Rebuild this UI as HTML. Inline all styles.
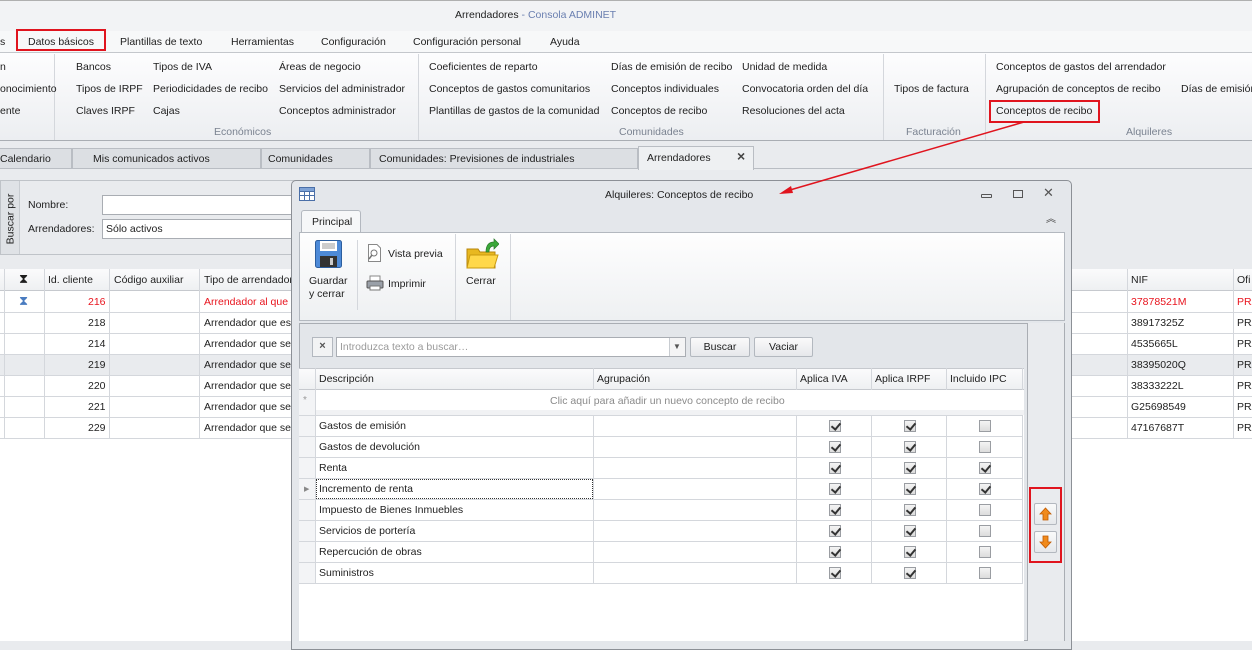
<!DOCTYPE html>
<html><head><meta charset="utf-8"><style>
*{box-sizing:border-box;margin:0;padding:0}
body{width:1252px;height:641px;overflow:hidden;position:relative;background:#e9ebee;font-family:"Liberation Sans",sans-serif;font-size:10.5px;color:#1e1e1e}
.a{position:absolute;white-space:nowrap}
.t{position:absolute;white-space:nowrap;line-height:14px}
.vl{position:absolute;width:1px;background:#d4d7dc}
.hl{position:absolute;height:1px;background:#d4d7dc}
.cb{position:absolute;width:12px;height:12px;border:1px solid #9a9da2;background:linear-gradient(#f4f4f4,#dcdcdc)}
.cb.c::after{content:"";position:absolute;left:3px;top:0px;width:4px;height:7px;border:solid #333;border-width:0 2px 2px 0;transform:rotate(40deg)}
.btn{position:absolute;border:1px solid #b3b8bf;border-radius:2px;background:linear-gradient(#fafafa,#e6e8eb);text-align:center;line-height:18px}
</style></head><body>
<div class="a" style="left:0;top:0;width:1252px;height:31px;background:#f2f3f5;border-top:1px solid #b0b0b0"></div>
<div class="t" style="left:455px;top:8px">Arrendadores <span style="color:#6a7fb0">- Consola ADMINET</span></div>
<div class="a" style="left:0;top:31px;width:1252px;height:22px;background:#f7f8f9;border-bottom:1px solid #c4c7cc"></div>
<div class="t" style="left:0;top:35px">s</div>
<div class="a" style="left:16px;top:29px;width:90px;height:22px;border:2px solid #e0141e"></div>
<div class="t" style="left:28px;top:35px">Datos básicos</div>
<div class="t" style="left:120px;top:35px">Plantillas de texto</div>
<div class="t" style="left:231px;top:35px">Herramientas</div>
<div class="t" style="left:321px;top:35px">Configuración</div>
<div class="t" style="left:413px;top:35px">Configuración personal</div>
<div class="t" style="left:550px;top:35px">Ayuda</div>
<div class="a" style="left:0;top:53px;width:1252px;height:88px;background:linear-gradient(#fdfdfe,#eceef1);border-bottom:1px solid #a9adb3"></div>
<div class="vl" style="left:54px;top:54px;height:86px"></div>
<div class="vl" style="left:418px;top:54px;height:86px"></div>
<div class="vl" style="left:883px;top:54px;height:86px"></div>
<div class="vl" style="left:985px;top:54px;height:86px"></div>
<div class="t" style="left:0;top:60px">n</div>
<div class="t" style="left:0;top:82px">onocimiento</div>
<div class="t" style="left:0;top:104px">ente</div>
<div class="t" style="left:76px;top:60px">Bancos</div>
<div class="t" style="left:76px;top:82px">Tipos de IRPF</div>
<div class="t" style="left:76px;top:104px">Claves IRPF</div>
<div class="t" style="left:153px;top:60px">Tipos de IVA</div>
<div class="t" style="left:153px;top:82px">Periodicidades de recibo</div>
<div class="t" style="left:153px;top:104px">Cajas</div>
<div class="t" style="left:279px;top:60px">Áreas de negocio</div>
<div class="t" style="left:279px;top:82px">Servicios del administrador</div>
<div class="t" style="left:279px;top:104px">Conceptos administrador</div>
<div class="t" style="left:214px;top:125px;color:#7a8290">Económicos</div>
<div class="t" style="left:429px;top:60px">Coeficientes de reparto</div>
<div class="t" style="left:429px;top:82px">Conceptos de gastos comunitarios</div>
<div class="t" style="left:429px;top:104px">Plantillas de gastos de la comunidad</div>
<div class="t" style="left:611px;top:60px">Días de emisión de recibo</div>
<div class="t" style="left:611px;top:82px">Conceptos individuales</div>
<div class="t" style="left:611px;top:104px">Conceptos de recibo</div>
<div class="t" style="left:742px;top:60px">Unidad de medida</div>
<div class="t" style="left:742px;top:82px">Convocatoria orden del día</div>
<div class="t" style="left:742px;top:104px">Resoluciones del acta</div>
<div class="t" style="left:619px;top:125px;color:#7a8290">Comunidades</div>
<div class="t" style="left:894px;top:82px">Tipos de factura</div>
<div class="t" style="left:906px;top:125px;color:#7a8290">Facturación</div>
<div class="t" style="left:996px;top:60px">Conceptos de gastos del arrendador</div>
<div class="t" style="left:996px;top:82px">Agrupación de conceptos de recibo</div>
<div class="t" style="left:1181px;top:82px">Días de emisión</div>
<div class="a" style="left:989px;top:100px;width:111px;height:23px;border:2px solid #e0141e"></div>
<div class="t" style="left:996px;top:104px">Conceptos de recibo</div>
<div class="t" style="left:1126px;top:125px;color:#7a8290">Alquileres</div>
<div class="a" style="left:0;top:148px;width:1252px;height:21px;border-bottom:1px solid #b9bdc3"></div>
<div class="a" style="left:-2px;top:148px;width:74px;height:21px;background:#dcdfe3;border:1px solid #b9bdc3"></div>
<div class="a" style="left:72px;top:148px;width:189px;height:21px;background:#dcdfe3;border:1px solid #b9bdc3"></div>
<div class="a" style="left:261px;top:148px;width:109px;height:21px;background:#dcdfe3;border:1px solid #b9bdc3"></div>
<div class="a" style="left:370px;top:148px;width:268px;height:21px;background:#dcdfe3;border:1px solid #b9bdc3"></div>
<div class="a" style="left:638px;top:146px;width:116px;height:24px;background:#eef0f2;border:1px solid #b9bdc3;border-bottom:none"></div>
<div class="t" style="left:0;top:152px">Calendario</div>
<div class="t" style="left:93px;top:152px">Mis comunicados activos</div>
<div class="t" style="left:268px;top:152px">Comunidades</div>
<div class="t" style="left:379px;top:152px">Comunidades: Previsiones de industriales</div>
<div class="t" style="left:647px;top:151px">Arrendadores</div>
<div class="t" style="left:737px;top:149px;font-size:14px;font-weight:bold;color:#444">×</div>
<div class="a" style="left:0;top:180px;width:300px;height:75px;background:#e9ebee;border:1px solid #bfc3c8"></div>
<div class="a" style="left:1px;top:181px;width:19px;height:73px;background:#dfe2e6;border-right:1px solid #c8ccd1"></div>
<div class="t" style="left:-15px;top:212px;transform:rotate(-90deg)">Buscar por</div>
<div class="t" style="left:28px;top:198px">Nombre:</div>
<div class="t" style="left:28px;top:222px">Arrendadores:</div>
<div class="a" style="left:102px;top:195px;width:200px;height:20px;background:#fff;border:1px solid #a9adb3"></div>
<div class="a" style="left:102px;top:219px;width:200px;height:20px;background:#fff;border:1px solid #a9adb3"></div>
<div class="t" style="left:106px;top:222px">Sólo activos</div>
<div class="a" style="left:0;top:269px;width:1252px;height:372px;background:#fff"></div>
<div class="a" style="left:0;top:269px;width:1252px;height:22px;background:linear-gradient(#fbfbfc,#eef0f2);border-bottom:1px solid #c6c9ce"></div>
<div class="a" style="left:0;top:354px;width:1252px;height:21px;background:#e9ebee"></div>
<div class="hl" style="left:0;top:312px;width:1252px"></div><div class="hl" style="left:0;top:333px;width:1252px"></div><div class="hl" style="left:0;top:354px;width:1252px"></div><div class="hl" style="left:0;top:375px;width:1252px"></div><div class="hl" style="left:0;top:396px;width:1252px"></div><div class="hl" style="left:0;top:417px;width:1252px"></div><div class="hl" style="left:0;top:438px;width:1252px"></div>
<div class="vl" style="left:4px;top:269px;height:169px"></div>
<div class="vl" style="left:44px;top:269px;height:169px"></div>
<div class="vl" style="left:109px;top:269px;height:169px"></div>
<div class="vl" style="left:199px;top:269px;height:169px"></div>
<div class="vl" style="left:1127px;top:269px;height:169px"></div>
<div class="vl" style="left:1233px;top:269px;height:169px"></div>
<div class="t" style="left:19px;top:272px;font-size:13px">⧗</div>
<div class="t" style="left:19px;top:294px;font-size:13px;color:#4a7cc0">⧗</div>
<div class="t" style="left:48px;top:273px">Id. cliente</div>
<div class="t" style="left:114px;top:273px">Código auxiliar</div>
<div class="t" style="left:204px;top:273px">Tipo de arrendador</div>
<div class="t" style="left:1131px;top:273px">NIF</div>
<div class="t" style="left:1237px;top:273px">Ofi</div>
<div class="t" style="left:88px;top:295px;color:#e8141e">216</div><div class="t" style="left:204px;top:295px;color:#e8141e">Arrendador al que</div><div class="t" style="left:1131px;top:295px;color:#e8141e">37878521M</div><div class="t" style="left:1237px;top:295px;color:#e8141e">PRA</div>
<div class="t" style="left:88px;top:316px">218</div><div class="t" style="left:204px;top:316px">Arrendador que es</div><div class="t" style="left:1131px;top:316px">38917325Z</div><div class="t" style="left:1237px;top:316px">PRA</div>
<div class="t" style="left:88px;top:337px">214</div><div class="t" style="left:204px;top:337px">Arrendador que se</div><div class="t" style="left:1131px;top:337px">4535665L</div><div class="t" style="left:1237px;top:337px">PRA</div>
<div class="t" style="left:88px;top:358px">219</div><div class="t" style="left:204px;top:358px">Arrendador que se</div><div class="t" style="left:1131px;top:358px">38395020Q</div><div class="t" style="left:1237px;top:358px">PRA</div>
<div class="t" style="left:88px;top:379px">220</div><div class="t" style="left:204px;top:379px">Arrendador que se</div><div class="t" style="left:1131px;top:379px">38333222L</div><div class="t" style="left:1237px;top:379px">PRA</div>
<div class="t" style="left:88px;top:400px">221</div><div class="t" style="left:204px;top:400px">Arrendador que se</div><div class="t" style="left:1131px;top:400px">G25698549</div><div class="t" style="left:1237px;top:400px">PRA</div>
<div class="t" style="left:88px;top:421px">229</div><div class="t" style="left:204px;top:421px">Arrendador que se</div><div class="t" style="left:1131px;top:421px">47167687T</div><div class="t" style="left:1237px;top:421px">PRA</div>
<div class="a" style="left:291px;top:180px;width:781px;height:470px;background:#e4e7eb;border:1px solid #8c9096;border-radius:5px 5px 0 0"></div>
<svg class="a" style="left:299px;top:187px" width="16" height="14"><rect x="0.5" y="0.5" width="15" height="13" fill="#fff" stroke="#4a6fa8"/><path d="M0 4.5H16M0 8.5H16M5.5 0V14M10.5 0V14" stroke="#4a6fa8"/><rect x="1" y="1" width="14" height="3" fill="#7fa3d6"/></svg>
<div class="t" style="left:605px;top:188px">Alquileres: Conceptos de recibo</div>
<div class="a" style="left:981px;top:194px;width:11px;height:4px;border:1px solid #555;border-radius:1px"></div>
<div class="a" style="left:1013px;top:190px;width:10px;height:8px;border:1px solid #555"></div>
<div class="t" style="left:1043px;top:186px;font-size:13px;color:#555">✕</div>
<div class="t" style="left:1046px;top:213px;font-size:10px;color:#444">︽</div>
<div class="a" style="left:301px;top:210px;width:60px;height:23px;background:#f6f7f8;border:1px solid #b3b8bf;border-bottom:none;border-radius:3px 3px 0 0"></div>
<div class="t" style="left:312px;top:215px">Principal</div>
<div class="a" style="left:299px;top:232px;width:766px;height:89px;background:linear-gradient(#fefefe,#eef0f2);border:1px solid #b3b8bf"></div>
<div class="vl" style="left:357px;top:240px;height:70px"></div>
<div class="vl" style="left:455px;top:234px;height:86px"></div>
<div class="vl" style="left:510px;top:234px;height:86px"></div>
<svg class="a" style="left:315px;top:240px" width="27" height="28"><rect x="0.5" y="0.5" width="26" height="27" rx="2" fill="#4d8ad8" stroke="#2c5e9e"/><rect x="5" y="1" width="17" height="10" fill="#fff"/><path d="M7 4H20M7 6H20M7 8H20" stroke="#999"/><rect x="5" y="16" width="17" height="11" fill="#333"/><rect x="15" y="18" width="3" height="7" fill="#ccc"/></svg>
<div class="t" style="left:309px;top:274px">Guardar</div>
<div class="t" style="left:309px;top:287px">y cerrar</div>
<svg class="a" style="left:366px;top:244px" width="16" height="18"><path d="M2.5 .5H11L14.5 4V17.5H2.5Z" fill="#fff" stroke="#888"/><circle cx="8" cy="9" r="3" fill="none" stroke="#777"/><path d="M6 11L3 15" stroke="#777" stroke-width="1.5"/></svg>
<div class="t" style="left:388px;top:247px">Vista previa</div>
<svg class="a" style="left:366px;top:275px" width="18" height="16"><rect x="4" y="1" width="10" height="6" fill="#fff" stroke="#888"/><rect x="1" y="6" width="16" height="7" rx="1" fill="#9aa0a8" stroke="#555"/><rect x="4" y="11" width="10" height="4" fill="#fff" stroke="#777"/></svg>
<div class="t" style="left:388px;top:277px">Imprimir</div>
<svg class="a" style="left:466px;top:238px" width="33" height="32"><path d="M1 11H12L14 14H29V30H1Z" fill="#e8b820" stroke="#b8860b"/><path d="M4 17H32L28 30H1Z" fill="#ffd84a" stroke="#c99a10"/><path d="M20 14C20 7 23 4 28 4V1L33 6L28 11V8C25 8 23 10 23 14Z" fill="#3aa83a" stroke="#2a7a2a" stroke-width=".7"/></svg>
<div class="t" style="left:466px;top:274px">Cerrar</div>
<div class="a" style="left:299px;top:323px;width:729px;height:318px;background:#e3e6ea;border:1px solid #a9adb3"></div>
<div class="a" style="left:312px;top:337px;width:21px;height:20px;border:1px solid #b3b8bf;background:#f2f3f4;text-align:center;line-height:17px;font-size:11px;font-weight:bold;color:#555">×</div>
<div class="a" style="left:336px;top:337px;width:350px;height:20px;background:#fff;border:1px solid #a9adb3"></div>
<div class="t" style="left:340px;top:340px;color:#9a9a9a">Introduzca texto a buscar…</div>
<div class="a" style="left:669px;top:338px;width:16px;height:18px;border-left:1px solid #c8ccd1;background:#f4f4f5"></div>
<div class="t" style="left:673px;top:340px;font-size:8px;color:#555">▼</div>
<div class="btn" style="left:690px;top:337px;width:60px;height:20px">Buscar</div>
<div class="btn" style="left:754px;top:337px;width:59px;height:20px">Vaciar</div>
<div class="a" style="left:299px;top:368px;width:725px;height:273px;background:#fff"></div>
<div class="a" style="left:299px;top:368px;width:725px;height:22px;background:linear-gradient(#fbfbfc,#eef0f2);border-top:1px solid #c6c9ce;border-bottom:1px solid #c6c9ce"></div>
<div class="a" style="left:299px;top:410px;width:725px;height:5px;background:#f1f2f4"></div>
<div class="vl" style="left:315px;top:368px;height:215px"></div>
<div class="vl" style="left:593px;top:368px;height:22px"></div><div class="vl" style="left:796px;top:368px;height:22px"></div><div class="vl" style="left:871px;top:368px;height:22px"></div><div class="vl" style="left:946px;top:368px;height:22px"></div><div class="vl" style="left:1022px;top:368px;height:22px"></div>
<div class="vl" style="left:593px;top:415px;height:168px"></div><div class="vl" style="left:796px;top:415px;height:168px"></div><div class="vl" style="left:871px;top:415px;height:168px"></div><div class="vl" style="left:946px;top:415px;height:168px"></div><div class="vl" style="left:1022px;top:415px;height:168px"></div>
<div class="a" style="left:299px;top:390px;width:16px;height:193px;background:#f3f4f6"></div>
<div class="t" style="left:319px;top:372px">Descripción</div>
<div class="t" style="left:597px;top:372px">Agrupación</div>
<div class="t" style="left:800px;top:372px">Aplica IVA</div>
<div class="t" style="left:875px;top:372px">Aplica IRPF</div>
<div class="t" style="left:950px;top:372px">Incluido IPC</div>
<div class="t" style="left:303px;top:394px;color:#999;font-size:10px">*</div>
<div class="t" style="left:550px;top:394px;color:#8a8a8a">Clic aquí para añadir un nuevo concepto de recibo</div>
<div class="hl" style="left:299px;top:415px;width:724px"></div>
<div class="hl" style="left:299px;top:436px;width:724px"></div><div class="hl" style="left:299px;top:457px;width:724px"></div><div class="hl" style="left:299px;top:478px;width:724px"></div><div class="hl" style="left:299px;top:499px;width:724px"></div><div class="hl" style="left:299px;top:520px;width:724px"></div><div class="hl" style="left:299px;top:541px;width:724px"></div><div class="hl" style="left:299px;top:562px;width:724px"></div><div class="hl" style="left:299px;top:583px;width:724px"></div>
<div class="a" style="left:316px;top:479px;width:277px;height:20px;border:1px dotted #333"></div>
<div class="t" style="left:304px;top:483px;font-size:7px;color:#888">▶</div>
<div class="t" style="left:319px;top:419px">Gastos de emisión</div>
<div class="t" style="left:319px;top:440px">Gastos de devolución</div>
<div class="t" style="left:319px;top:461px">Renta</div>
<div class="t" style="left:319px;top:482px">Incremento de renta</div>
<div class="t" style="left:319px;top:503px">Impuesto de Bienes Inmuebles</div>
<div class="t" style="left:319px;top:524px">Servicios de portería</div>
<div class="t" style="left:319px;top:545px">Repercución de obras</div>
<div class="t" style="left:319px;top:566px">Suministros</div>
<div class="cb c" style="left:829px;top:420px"></div><div class="cb c" style="left:904px;top:420px"></div><div class="cb" style="left:979px;top:420px"></div>
<div class="cb c" style="left:829px;top:441px"></div><div class="cb c" style="left:904px;top:441px"></div><div class="cb" style="left:979px;top:441px"></div>
<div class="cb c" style="left:829px;top:462px"></div><div class="cb c" style="left:904px;top:462px"></div><div class="cb c" style="left:979px;top:462px"></div>
<div class="cb c" style="left:829px;top:483px"></div><div class="cb c" style="left:904px;top:483px"></div><div class="cb c" style="left:979px;top:483px"></div>
<div class="cb c" style="left:829px;top:504px"></div><div class="cb c" style="left:904px;top:504px"></div><div class="cb" style="left:979px;top:504px"></div>
<div class="cb c" style="left:829px;top:525px"></div><div class="cb c" style="left:904px;top:525px"></div><div class="cb" style="left:979px;top:525px"></div>
<div class="cb c" style="left:829px;top:546px"></div><div class="cb c" style="left:904px;top:546px"></div><div class="cb" style="left:979px;top:546px"></div>
<div class="cb c" style="left:829px;top:567px"></div><div class="cb c" style="left:904px;top:567px"></div><div class="cb" style="left:979px;top:567px"></div>
<div class="a" style="left:1028px;top:323px;width:37px;height:318px;background:#e9ebee;border-right:1px solid #a9adb3"></div>
<div class="a" style="left:1029px;top:487px;width:33px;height:76px;border:2px solid #e0141e"></div>
<div class="btn" style="left:1034px;top:503px;width:23px;height:22px"></div>
<div class="btn" style="left:1034px;top:531px;width:23px;height:22px"></div>
<svg class="a" style="left:1039px;top:507px" width="13" height="14"><path d="M6.5 1L12 7H9V13H4V7H1Z" fill="#f08a1c" stroke="#c05a00" stroke-width=".8"/></svg>
<svg class="a" style="left:1039px;top:535px" width="13" height="14"><path d="M6.5 13L12 7H9V1H4V7H1Z" fill="#f08a1c" stroke="#c05a00" stroke-width=".8"/></svg>
<svg class="a" style="left:0;top:0" width="1252" height="641"><line x1="1024" y1="122" x2="790" y2="190" stroke="#e0141e" stroke-width="1.5"/><path d="M779 194L791 186L793 193Z" fill="#e0141e"/></svg>
</body></html>
